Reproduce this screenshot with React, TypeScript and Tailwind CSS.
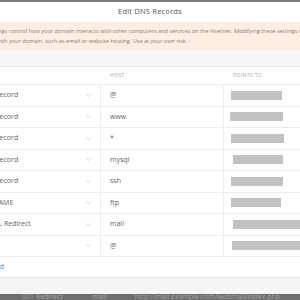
import React from "react";

type Row = { type: string; host: string; bar: number; barLeft: number };

const rows: Row[] = [
  { type: "A Record", host: "@", bar: 51, barLeft: 7 },
  { type: "A Record", host: "www", bar: 53, barLeft: 6 },
  { type: "A Record", host: "*", bar: 53, barLeft: 7 },
  { type: "A Record", host: "mysql", bar: 50, barLeft: 9 },
  { type: "A Record", host: "ssh", bar: 52, barLeft: 7 },
  { type: "CNAME", host: "ftp", bar: 50, barLeft: 7 },
  { type: "URL Redirect", host: "mail", bar: 90, barLeft: 9 },
  { type: "", host: "@", bar: 90, barLeft: 8 },
];

const Chevron = () => (
  <svg width="5" height="3" viewBox="0 0 10 6" fill="none" className="shrink-0">
    <path d="M1 1l4 4 4-4" stroke="#c4c4c4" strokeWidth="1.4" />
  </svg>
);

export default function App() {
  return (
    <div className="w-[300px] h-[300px] overflow-hidden bg-[#6e6e6e] font-['Open_Sans',sans-serif] flex flex-col">
      {/* backdrop strip on top */}
      <div className="h-[2px] shrink-0 bg-[#7a7a7a]" />

      {/* modal, wider than the window */}
      <div className="-ml-[160px] w-[620px] shrink-0 bg-white flex flex-col">
        <div className="h-[20px] flex items-center justify-center text-[7.5px] text-[#555] tracking-[0.2px]">
          Edit DNS Records
        </div>

        <div className="h-[28px] bg-[#fdeee3] flex flex-col justify-center pl-[130px] text-[5.6px] leading-[10px] text-[#8b7b70] whitespace-nowrap">
          <div>
            These settings control how your domain interacts with other computers and services on the Internet. Modifying these settings may cause
          </div>
          <div>problems with your domain, such as email or website hosting. Use at your own risk.</div>
        </div>

        <div className="h-[17px] bg-[#f7f7f7] border-b border-[#e6e6e6]" />

        {/* table header */}
        <div className="h-[18px] grid grid-cols-[138px_123px_123px_1fr] items-center border-b border-[#ececec] text-[5px] tracking-[0.4px] text-[#a8a8a8] uppercase">
          <div />
          <div className="pl-[5px]">Type</div>
          <div className="pl-[9px]">Host</div>
          <div className="pl-[9px]">Points To</div>
        </div>

        {rows.map((r, i) => (
          <div
            key={i}
            className="h-[21.5px] grid grid-cols-[138px_123px_123px_1fr] border-b border-[#ececec] text-[7px] text-[#666]"
          >
            <div />
            <div className="flex items-center justify-between pl-[11px] pr-[9px] border-r border-[#ececec]">
              <span>{r.type}</span>
              <Chevron />
            </div>
            <div className="flex items-center pl-[9px] border-r border-[#ececec]">{r.host}</div>
            <div className="flex items-center">
              <div className="h-[9px] bg-[#c2c2c2]" style={{ width: r.bar, marginLeft: r.barLeft }} />
            </div>
          </div>
        ))}

        <div className="h-[21px] flex items-center pl-[151px] text-[7px] text-[#3a9ad6] border-b border-[#e6e6e6]">
          Add
        </div>

        <div className="h-[16px] bg-[#f5f5f5]" />
      </div>

      {/* backdrop rows peeking below */}
      <div className="flex-1 flex items-start text-[7px] leading-[8px] text-[#a3a3a3] whitespace-nowrap -mt-[1px]">
        <span className="ml-[22px]">301 Redirect</span>
        <span className="ml-[30px]">mail</span>
        <span className="ml-[28px]">http://mail.example.com/webmail/index.php</span>
      </div>
    </div>
  );
}
